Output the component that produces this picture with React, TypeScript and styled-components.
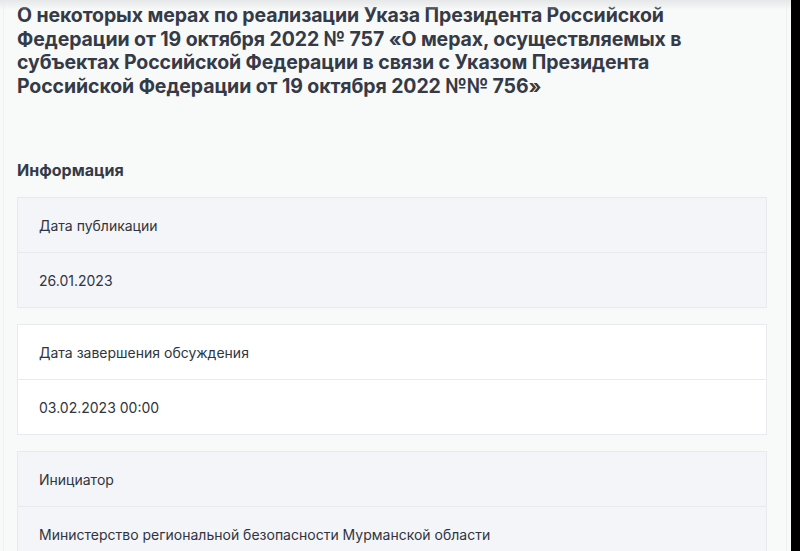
import React from 'react';
import styled, { createGlobalStyle } from 'styled-components';

const GlobalStyle = createGlobalStyle`
  html, body {
    margin: 0;
    padding: 0;
    background: #000;
  }
  body {
    font-family: Inter, "Noto Sans", "Liberation Sans", sans-serif;
    -webkit-font-smoothing: antialiased;
  }
`

const Sheet = styled.div`
  width: 791px;
  height: 551px;
  overflow: hidden;
  background: #f8f9f9;
  box-sizing: border-box;
  padding: 0 4px 0 3px;
  position: relative;

  &::before {
    content: '';
    position: absolute;
    left: 0;
    right: 0;
    top: 0;
    height: 10px;
    background: linear-gradient(#e6e7e8, rgba(248, 249, 249, 0));
  }
`

const Frame = styled.div`
  height: 100%;
  border-left: 1px solid #eef0f1;
  border-right: 1px solid #eef0f1;
  padding: 4px 19px 0 13px;
  box-sizing: border-box;
`

const Title = styled.h1`
  margin: 0;
  font-size: 19.5px;
  line-height: 23.6px;
  font-weight: 700;
  color: #353a47;
  letter-spacing: -0.1px;
`

const SectionTitle = styled.h2`
  margin: 62px 0 0;
  font-size: 16px;
  line-height: 20px;
  font-weight: 700;
  color: #353a47;
`

const Cards = styled.div`
  display: flex;
  flex-direction: column;
  gap: 16px;
  margin-top: 17px;
`

const Card = styled.div<{ $tinted: boolean }>`
  border: 1px solid #e8eaed;
  background: ${p => (p.$tinted ? '#f4f5f9' : '#ffffff')};
`

const Row = styled.div`
  height: 54px;
  display: flex;
  align-items: center;
  padding: 0 21px;
  font-size: 14px;
  color: #30343d;

  & + & {
    border-top: 1px solid #e8eaed;
  }
`

const items = [
  { label: 'Дата публикации', value: '26.01.2023' },
  { label: 'Дата завершения обсуждения', value: '03.02.2023 00:00' },
  { label: 'Инициатор', value: 'Министерство региональной безопасности Мурманской области' },
]

function App() {
  return (
    <>
      <GlobalStyle />
      <Sheet>
        <Frame>
          <Title>
            О некоторых мерах по реализации Указа Президента Российской Федерации от 19 октября 2022 № 757 «О мерах, осуществляемых в субъектах Российской Федерации в связи с Указом Президента Российской Федерации от 19 октября 2022 №№ 756»
          </Title>
          <SectionTitle>Информация</SectionTitle>
          <Cards>
            {items.map((item, i) => (
              <Card key={item.label} $tinted={i % 2 === 0}>
                <Row>{item.label}</Row>
                <Row>{item.value}</Row>
              </Card>
            ))}
          </Cards>
        </Frame>
      </Sheet>
    </>
  )
}

export default App;
